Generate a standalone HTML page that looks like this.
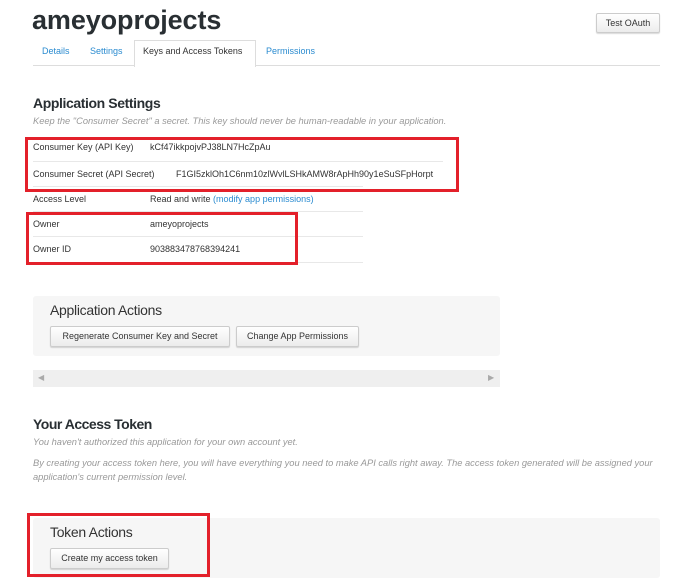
<!DOCTYPE html>
<html><head><style>
body{margin:0;width:674px;height:584px;background:#fff;font-family:"Liberation Sans",sans-serif;position:relative;overflow:hidden;color:#333}
.a{position:absolute;white-space:nowrap}
.s{font-size:9px;color:#333}
.ln{position:absolute;height:1px;background:#e8e8e8}
.btn{position:absolute;border:1px solid #ccc;border-radius:2px;background:linear-gradient(#fff,#ececec);font-size:9px;color:#333;text-align:center;box-shadow:0 1px 1px rgba(0,0,0,.15)}
.red{position:absolute;border:3px solid #e3202a}
.it{font-style:italic;color:#999;font-size:9.3px}
</style></head><body>
<div class="a" style="left:32px;top:5px;font-size:27px;font-weight:bold;color:#292f33;letter-spacing:-0.1px">ameyoprojects</div>
<div class="btn" style="left:596px;top:13px;width:62px;height:18px;line-height:18px">Test OAuth</div>
<div class="ln" style="left:33px;top:65px;width:627px;background:#ddd"></div>
<div style="position:absolute;left:134px;top:40px;width:120px;height:26px;border:1px solid #ddd;border-bottom:none;background:#fff"></div>
<div class="a" style="left:42px;top:46px;font-size:9px;color:#2a8bd0">Details</div>
<div class="a" style="left:90px;top:46px;font-size:9px;color:#2a8bd0">Settings</div>
<div class="a" style="left:143px;top:46px;font-size:9px;color:#333">Keys and Access Tokens</div>
<div class="a" style="left:266px;top:46px;font-size:9px;color:#2a8bd0">Permissions</div>
<div class="a" style="left:33px;top:95px;font-size:14px;font-weight:bold;color:#292f33;letter-spacing:-0.4px">Application Settings</div>
<div class="a it" style="left:33px;top:116px">Keep the "Consumer Secret" a secret. This key should never be human-readable in your application.</div>
<div class="a s" style="left:33px;top:142px">Consumer Key (API Key)</div><div class="a s" style="left:150px;top:142px">kCf47ikkpojvPJ38LN7HcZpAu</div>
<div class="ln" style="left:33px;top:161px;width:410px"></div>
<div class="a s" style="left:33px;top:169px">Consumer Secret (API Secret)</div><div class="a s" style="left:176px;top:169px">F1GI5zklOh1C6nm10zlWvlLSHkAMW8rApHh90y1eSuSFpHorpt</div>
<div class="ln" style="left:33px;top:186px;width:330px"></div>
<div class="a s" style="left:33px;top:194px">Access Level</div><div class="a s" style="left:150px;top:194px">Read and write <span style="color:#2a8bd0">(modify app permissions)</span></div>
<div class="ln" style="left:33px;top:211px;width:330px"></div>
<div class="a s" style="left:33px;top:219px">Owner</div><div class="a s" style="left:150px;top:219px">ameyoprojects</div>
<div class="ln" style="left:33px;top:236px;width:330px"></div>
<div class="a s" style="left:33px;top:244px">Owner ID</div><div class="a s" style="left:150px;top:244px">903883478768394241</div>
<div class="ln" style="left:33px;top:262px;width:330px"></div>
<div class="red" style="left:25px;top:137px;width:428px;height:49px"></div>
<div class="red" style="left:26px;top:212px;width:266px;height:47px"></div>
<div style="position:absolute;left:33px;top:296px;width:467px;height:60px;background:#f6f6f6;border-radius:3px"></div>
<div class="a" style="left:50px;top:302px;font-size:14px;color:#333;letter-spacing:-0.3px">Application Actions</div>
<div class="btn" style="left:50px;top:326px;width:178px;height:19px;line-height:19px">Regenerate Consumer Key and Secret</div>
<div class="btn" style="left:236px;top:326px;width:121px;height:19px;line-height:19px">Change App Permissions</div>
<div style="position:absolute;left:33px;top:370px;width:467px;height:17px;background:#efefef"></div>
<div class="a" style="left:38px;top:373px;font-size:8px;color:#aaa">◀</div>
<div class="a" style="left:488px;top:373px;font-size:8px;color:#aaa">▶</div>
<div class="a" style="left:33px;top:416px;font-size:14px;font-weight:bold;color:#292f33;letter-spacing:-0.5px">Your Access Token</div>
<div class="a it" style="left:33px;top:437px">You haven't authorized this application for your own account yet.</div>
<div class="a it" style="left:33px;top:458px">By creating your access token here, you will have everything you need to make API calls right away. The access token generated will be assigned your</div>
<div class="a it" style="left:33px;top:472px">application's current permission level.</div>
<div style="position:absolute;left:33px;top:518px;width:627px;height:60px;background:#f6f6f6;border-radius:3px"></div>
<div class="a" style="left:50px;top:524px;font-size:14px;color:#333;letter-spacing:-0.3px">Token Actions</div>
<div class="btn" style="left:50px;top:548px;width:117px;height:19px;line-height:19px">Create my access token</div>
<div class="red" style="left:27px;top:513px;width:177px;height:58px"></div>
</body></html>
